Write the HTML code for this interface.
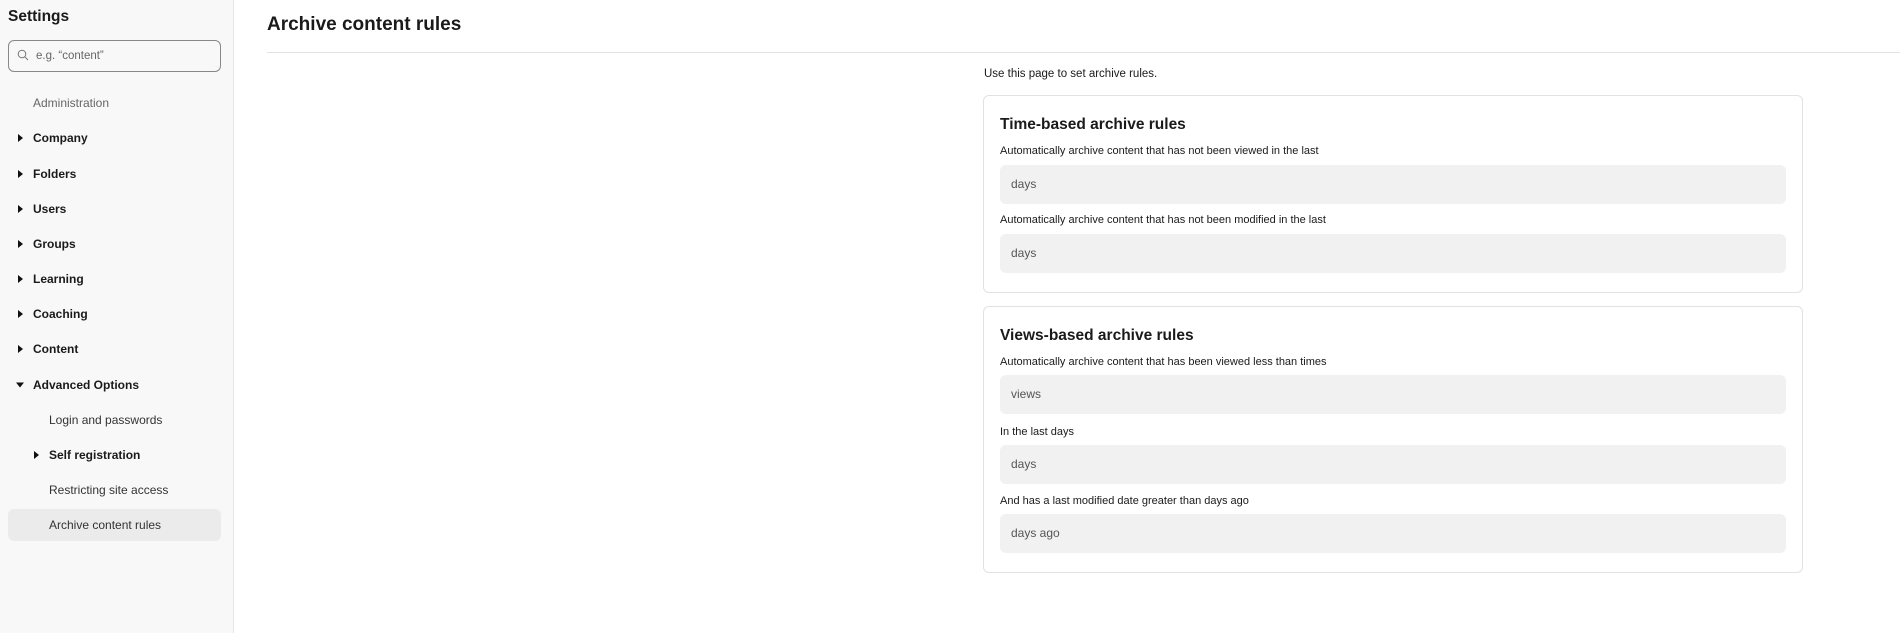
<!DOCTYPE html>
<html><head><meta charset="utf-8"><style>
*{margin:0;padding:0;box-sizing:border-box}
body{width:1900px;height:633px;position:relative;background:#fff;font-family:"Liberation Sans",sans-serif;color:#1a1a1a;overflow:hidden}
.sb{position:absolute;left:0;top:0;width:234px;height:633px;background:#f8f8f8;border-right:1px solid #e6e6e6}
.a{position:absolute;white-space:nowrap}
.it{position:absolute;font-size:12px;transform:translateY(-50%);white-space:nowrap}
.b{font-weight:bold}
.tri{position:absolute;width:0;height:0;transform:translateY(-50%)}
.r{border-top:4px solid transparent;border-bottom:4px solid transparent;border-left:5px solid #111}
.d{border-left:4px solid transparent;border-right:4px solid transparent;border-top:5px solid #111}
.card{position:absolute;left:983px;width:820px;border:1px solid #e2e2e2;border-radius:6px}
.inp{position:absolute;left:1000px;width:786px;height:39px;background:#f1f1f1;border-radius:6px;font-size:12px;color:#555;padding-left:11px;line-height:39px}
.lab{position:absolute;left:1000px;font-size:11px;transform:translateY(-50%);white-space:nowrap}
.ct{position:absolute;left:1000px;font-size:15.5px;font-weight:bold;transform:translateY(-50%)}
</style></head><body>
<div class="sb"></div>
<div class="a b" style="left:8px;top:8px;font-size:15.5px">Settings</div>
<div class="a" style="left:8px;top:40px;width:213px;height:32px;border:1px solid #888;border-radius:6px;background:#f8f8f8"></div>
<svg class="a" style="left:17px;top:49px" width="12" height="12" viewBox="0 0 12 12"><circle cx="5" cy="5" r="3.8" fill="none" stroke="#777" stroke-width="1"/><path d="M7.8 7.8L11 11" stroke="#777" stroke-width="1"/></svg>
<div class="it" style="left:36px;top:56px;font-size:11.5px;color:#666">e.g. “content”</div>
<div class="it" style="left:33px;top:103px;color:#666">Administration</div>
<div class="tri r" style="left:18px;top:138px"></div><div class="it b" style="left:33px;top:138px">Company</div>
<div class="tri r" style="left:18px;top:174px"></div><div class="it b" style="left:33px;top:174px">Folders</div>
<div class="tri r" style="left:18px;top:209px"></div><div class="it b" style="left:33px;top:209px">Users</div>
<div class="tri r" style="left:18px;top:244px"></div><div class="it b" style="left:33px;top:244px">Groups</div>
<div class="tri r" style="left:18px;top:279px"></div><div class="it b" style="left:33px;top:279px">Learning</div>
<div class="tri r" style="left:18px;top:314px"></div><div class="it b" style="left:33px;top:314px">Coaching</div>
<div class="tri r" style="left:18px;top:349px"></div><div class="it b" style="left:33px;top:349px">Content</div>
<div class="tri d" style="left:16px;top:385px"></div><div class="it b" style="left:33px;top:385px">Advanced Options</div>
<div class="it" style="left:49px;top:420px;color:#333">Login and passwords</div>
<div class="tri r" style="left:34px;top:455px"></div><div class="it b" style="left:49px;top:455px">Self registration</div>
<div class="it" style="left:49px;top:490px;color:#333">Restricting site access</div>
<div class="a" style="left:8px;top:509px;width:213px;height:32px;background:#ebebeb;border-radius:6px"></div>
<div class="it" style="left:49px;top:525px;color:#333">Archive content rules</div>

<div class="a b" style="left:267px;top:14px;font-size:19px">Archive content rules</div>
<div class="a" style="left:267px;top:52px;width:1633px;height:1px;background:#e2e2e2"></div>
<div class="a" style="left:984px;top:68px;font-size:11.5px">Use this page to set archive rules.</div>

<div class="card" style="top:95px;height:198px"></div>
<div class="ct" style="top:125px">Time-based archive rules</div>
<div class="lab" style="top:151px">Automatically archive content that has not been viewed in the last</div>
<div class="inp" style="top:165px">days</div>
<div class="lab" style="top:220px">Automatically archive content that has not been modified in the last</div>
<div class="inp" style="top:234px">days</div>

<div class="card" style="top:306px;height:267px"></div>
<div class="ct" style="top:336px">Views-based archive rules</div>
<div class="lab" style="top:362px">Automatically archive content that has been viewed less than times</div>
<div class="inp" style="top:375px">views</div>
<div class="lab" style="top:432px">In the last days</div>
<div class="inp" style="top:445px">days</div>
<div class="lab" style="top:501px">And has a last modified date greater than days ago</div>
<div class="inp" style="top:514px">days ago</div>
</body></html>
